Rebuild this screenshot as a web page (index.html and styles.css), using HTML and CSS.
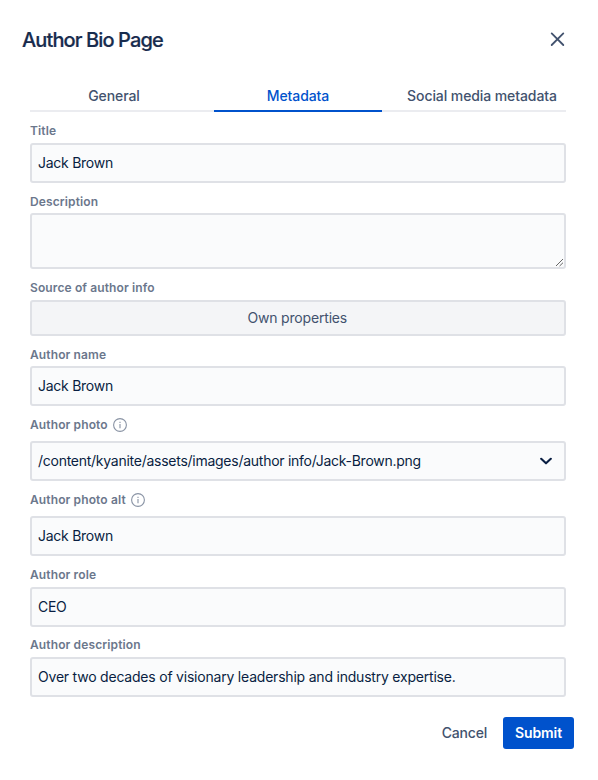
FILE: index.html
```html
<!DOCTYPE html>
<html lang="en">
<head>
<meta charset="utf-8">
<title>Author Bio Page</title>
<link rel="stylesheet" href="styles.css">
</head>
<body>
<main class="dialog">
  <header class="header">
    <h1 class="heading"><span>Author Bio Page</span></h1>
    <button class="close" aria-label="Close">
      <svg width="16" height="16" viewBox="0 0 16 16"><path d="M1.7 1.4 13.3 13M13.3 1.4 1.7 13"/></svg>
    </button>
  </header>
  <nav class="tabs">
    <a class="tab"><span>General</span></a>
    <a class="tab active"><span>Metadata</span></a>
    <a class="tab social"><span>Social media metadata</span></a>
  </nav>
  <form class="form">
    <div class="field"><div class="label"><span>Title</span></div><div class="control"><span>Jack Brown</span></div></div>
    <div class="field"><div class="label"><span>Description</span></div><div class="control area"><svg class="grip" width="9" height="9" viewBox="0 0 9 9"><path d="M1 8 8 1M4.6 8 8 4.7"/></svg></div></div>
    <div class="field"><div class="label"><span>Source of author info</span></div><div class="control choice"><span>Own properties</span></div></div>
    <div class="field"><div class="label"><span>Author name</span></div><div class="control"><span>Jack Brown</span></div></div>
    <div class="field"><div class="label tall"><span>Author photo</span><svg class="info" width="14" height="14" viewBox="0 0 14 14"><circle cx="7" cy="7" r="6.4"/><path d="M7 6v4.3M7 3.7v1.2"/></svg></div><div class="control"><span class="path">/content/kyanite/assets/images/author info/Jack-Brown.png</span><svg class="chevron" width="12" height="8" viewBox="0 0 12 8"><path d="M1.2 1.8 6 6.3 10.8 1.8"/></svg></div></div>
    <div class="field"><div class="label tall"><span>Author photo alt</span><svg class="info" width="14" height="14" viewBox="0 0 14 14"><circle cx="7" cy="7" r="6.4"/><path d="M7 6v4.3M7 3.7v1.2"/></svg></div><div class="control"><span>Jack Brown</span></div></div>
    <div class="field"><div class="label"><span>Author role</span></div><div class="control"><span>CEO</span></div></div>
    <div class="field"><div class="label"><span>Author description</span></div><div class="control"><span class="sentence">Over two decades of visionary leadership and industry expertise.</span></div></div>
  </form>
  <footer class="footer">
    <button class="cancel"><span>Cancel</span></button>
    <button class="submit"><span>Submit</span></button>
  </footer>
</main>
</body>
</html>
```
FILE: styles.css
```css
* { box-sizing: border-box; }
body { margin: 0; background: #fff; color: #172b4d; font: 14px/20px Inter, "Liberation Sans", sans-serif; }
button { border: 0; padding: 0; background: none; font: inherit; }
svg { fill: none; flex: none; }
.dialog { height: 780px; overflow: hidden; }
.header { display: flex; justify-content: space-between; align-items: center; height: 80px; padding: 0 32px 0 22px; }
.heading { margin: 0; font-size: 20px; line-height: 24px; font-weight: 500; letter-spacing: -0.88px; -webkit-text-stroke: 0.2px; }
.close { display: flex; width: 16px; height: 16px; }
.close svg { stroke: #42526e; stroke-width: 1.8; stroke-linecap: round; }
.tabs { display: flex; height: 32px; margin: 0 32.5px 0 30px; border-bottom: 2px solid #ebecf0; }
.tab { flex: none; width: 184px; height: 32px; display: flex; align-items: center; justify-content: center; color: #42526e; font-weight: 500; letter-spacing: -0.09px; padding-right: 16px; }
.tab.active { width: 168px; padding: 2px 0 0; color: #0052cc; border-bottom: 2px solid #0052cc; letter-spacing: -0.1px; }
.tab.social { padding: 0 0 0 16px; }
.form { padding: 0.7px 32.5px 0 30px; }
.label { display: flex; align-items: center; height: 30.4px; padding-top: 7.2px; color: #6b778c; font-size: 12px; line-height: 16px; font-weight: 600; letter-spacing: 0.12px; }
.label.tall { height: 35px; padding-top: 3px; }
.info { margin-left: 5px; stroke: #8993a4; stroke-width: 1.1; }
.control { display: flex; align-items: center; height: 40px; padding: 0 7px 0 6px; border: 2px solid #dfe1e6; border-radius: 3px; background: #fafbfc; color: #091e42; letter-spacing: -0.26px; }
.sentence { letter-spacing: -0.21px; }
.area { height: 56px; align-items: flex-end; justify-content: flex-end; padding: 0; }
.grip { stroke: #666; stroke-width: 1; }
.choice { height: 36px; justify-content: center; background: #f4f5f7; color: #42526e; letter-spacing: -0.18px; }
.chevron { margin-left: auto; margin-right: 4.5px; stroke: #091e42; stroke-width: 2.1; stroke-linecap: round; stroke-linejoin: round; }
.footer { display: flex; justify-content: flex-end; margin-top: 20px; padding-right: 24px; }
.cancel { height: 32px; margin-right: 16px; color: #42526e; font-weight: 500; letter-spacing: -0.2px; }
.submit { width: 71px; height: 32px; border-radius: 3px; background: #0052cc; color: #fff; font-weight: 600; letter-spacing: -0.1px; }
```
